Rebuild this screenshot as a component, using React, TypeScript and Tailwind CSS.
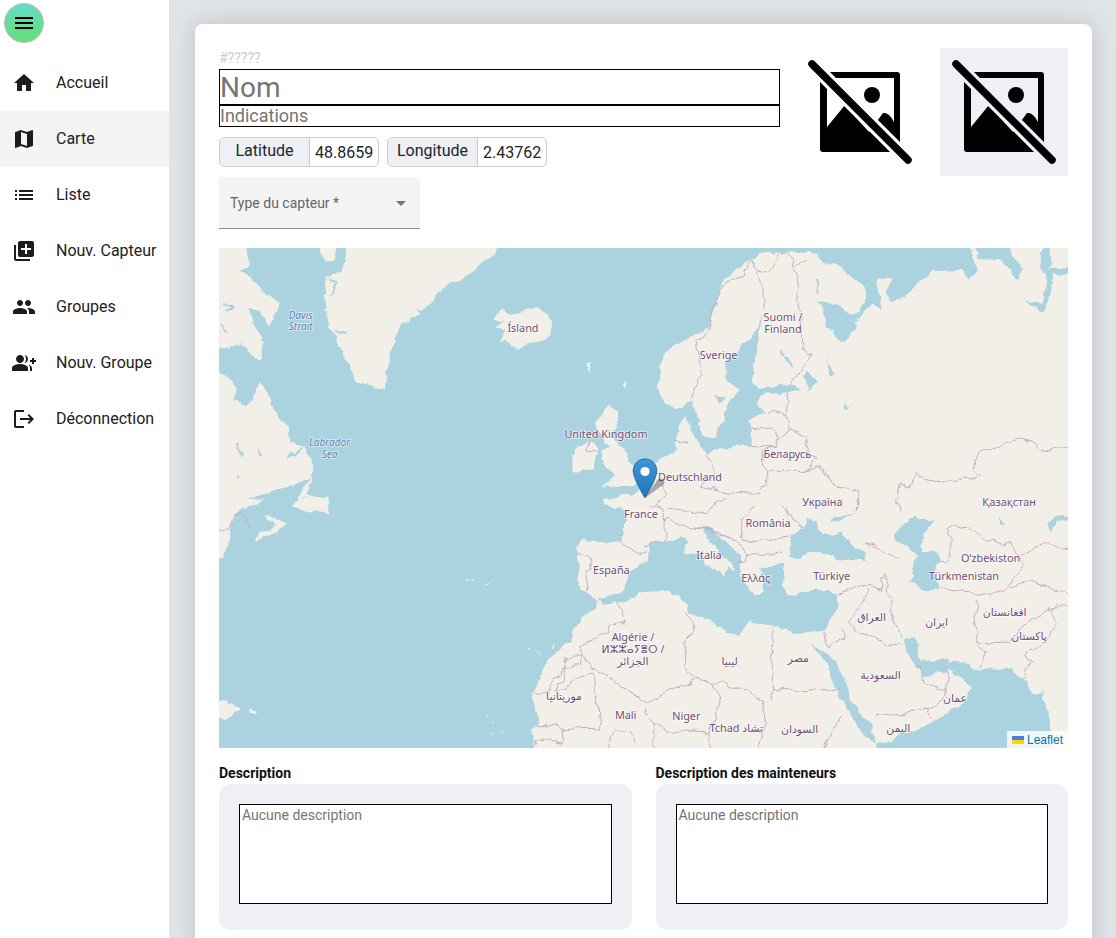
import { MdGroupAdd, MdHome, MdLibraryAdd, MdList, MdLogout, MdMap, MdMenu, MdPeople } from 'react-icons/md'

const NAV = [
  { label: 'Accueil', icon: MdHome },
  { label: 'Carte', icon: MdMap, active: true },
  { label: 'Liste', icon: MdList },
  { label: 'Nouv. Capteur', icon: MdLibraryAdd },
  { label: 'Groupes', icon: MdPeople },
  { label: 'Nouv. Groupe', icon: MdGroupAdd },
  { label: 'Déconnection', icon: MdLogout },
]

// map coordinates are 3x screen pixels, origin at the map's top-left corner
const LAND = [
  // Eurasia + Africa
  '945,1540 945,1470 935,1450 955,1425 950,1370 940,1340 985,1240 1015,1210 1060,1180 1065,1140 1095,1100 1120,1080 1135,1055 1130,1045 1100,1030 1085,1025 1072,990 1085,920 1075,895 1100,880 1205,888 1215,850 1215,790 1150,765 1150,752 1205,750 1240,738 1275,715 1285,650 1320,650 1335,630 1375,620 1375,540 1405,500 1415,560 1445,600 1475,612 1550,590 1595,590 1595,510 1645,490 1610,470 1635,440 1705,430 1745,420 1715,400 1625,425 1595,405 1615,290 1635,205 1605,260 1530,335 1525,390 1560,430 1520,480 1520,520 1485,560 1450,560 1425,460 1365,490 1330,470 1315,360 1345,310 1385,285 1440,250 1465,240 1495,170 1515,90 1575,50 1615,30 1675,10 1705,5 1765,10 1795,25 1875,70 1935,120 1935,165 1915,195 1865,180 1795,150 1820,210 1825,240 1875,280 1915,250 1915,210 1955,175 1985,190 1975,130 1970,85 2025,95 2000,130 2020,158 2050,155 2085,110 2135,70 2235,65 2250,90 2272,60 2260,30 2230,-40 2265,-40 2275,35 2345,40 2400,95 2415,60 2375,20 2375,-40 2600,-40 2600,1540 2500,1540 2495,1450 2470,1325 2440,1340 2405,1290 2375,1265 2285,1265 2195,1240 2195,1262 2255,1320 2215,1380 2125,1430 1975,1495 1975,1540',
  // Baffin island
  '-40,-40 60,-40 95,45 70,65 100,95 150,140 185,168 150,238 118,195 80,180 110,230 135,285 125,340 60,300 -40,290',
  // Labrador and eastern Canada
  '-40,362 45,400 48,445 82,476 130,405 160,470 185,520 215,578 255,600 282,640 282,690 200,722 90,745 135,752 120,765 50,790 35,825 20,930 -40,935',
  // Nova Scotia
  '105,882 115,855 150,845 170,830 135,808 150,805 195,820 210,825 200,835 140,865',
  // Newfoundland
  '220,775 238,752 320,748 335,800 310,790 270,790',
  '240,745 285,680 262,745 320,745 300,750 240,750',
  // Greenland and the island above it
  '375,-40 855,-40 820,30 760,65 720,100 690,100 670,120 640,165 590,210 550,225 540,265 510,320 505,370 495,420 470,425 415,395 380,330 345,270 320,190 315,130 320,85 360,75 385,40',
  '296,5 300,30 320,48 345,35 360,-40 300,-40',
  // Iceland
  '820,215 845,180 870,200 905,195 960,175 1000,220 990,260 950,280 915,300 880,290 845,280 860,250 825,245 860,225',
  // Ireland, Great Britain, Faroe, Shetland
  '1060,675 1065,610 1105,580 1135,600 1125,660 1075,680',
  '1140,720 1190,690 1155,640 1150,610 1170,590 1130,540 1140,500 1170,470 1200,500 1200,520 1175,560 1215,600 1245,660 1270,695 1240,708',
  '1108,342 1122,342 1116,372',
  '1205,410 1218,395 1212,425',
  // Mediterranean islands
  '1382,900 1395,900 1392,925 1380,925',
  '1378,940 1400,940 1398,985 1378,985',
  '1445,1005 1495,1012 1500,1030 1475,1030',
  '1635,1065 1680,1068 1635,1070',
  '1785,1072 1820,1060 1800,1078',
  '1240,985 1262,978 1258,990',
  // Hispaniola, Puerto Rico
  '-40,1365 30,1363 65,1385 15,1405 -40,1395',
  '85,1388 112,1390 112,1398 88,1398',
  // Atlantic specks
  '745,992 760,990 755,998',
  '765,990 772,988 770,994',
  '792,1010 805,1012 795,1015',
  '940,1117 947,1118 942,1122',
  '925,1205 930,1200 932,1210',
  '945,1205 955,1208 950,1212',
  '962,1210 970,1212 965,1217',
  '990,1205 1003,1188 997,1210',
  '802,1412 808,1412 806,1418',
  '822,1425 830,1425 826,1430',
  '812,1450 820,1448 818,1455',
  '838,1445 846,1445 842,1452',
]

const SEAS = [
  // Mediterranean
  '1135,1045 1205,1040 1230,985 1280,940 1285,890 1375,865 1405,880 1400,920 1440,925 1520,990 1505,1005 1515,975 1520,955 1550,965 1515,930 1445,840 1475,840 1570,930 1565,990 1600,1030 1610,1040 1625,1045 1640,1030 1620,960 1695,950 1705,1040 1755,1035 1850,1035 1840,1100 1820,1145 1735,1155 1655,1135 1595,1115 1560,1165 1515,1135 1405,1090 1375,1030 1275,1035 1200,1070 1150,1065',
  // Black Sea and Azov
  '1705,910 1725,865 1765,810 1800,825 1795,840 1830,860 1870,855 1875,870 1940,910 1940,940 1875,930 1785,920 1705,930',
  '1830,820 1900,795 1855,830',
  // Caspian
  '2035,850 2075,810 2145,810 2115,860 2105,910 2155,920 2165,940 2145,950 2155,1030 2105,1035 2070,1000 2095,930 2065,895 2035,880',
  // Red Sea and Suez
  '1785,1175 1822,1215 1825,1215 1875,1290 1895,1350 1955,1430 1975,1495 1965,1490 1915,1430 1865,1350 1840,1290 1805,1220',
  // Persian Gulf
  '2055,1175 2085,1170 2110,1230 2165,1240 2195,1230 2195,1260 2185,1270 2115,1285 2095,1240 2065,1210',
  // Ob gulf
  '2470,-40 2490,-40 2495,60 2600,55 2600,72 2505,75 2490,150 2465,185 2415,165 2470,160 2485,100 2465,30',
  // lakes
  '1745,385 1765,365 1795,400 1765,425',
  '1820,330 1855,385 1835,385',
  '1870,460 1895,480 1880,485',
  '1490,450 1515,445 1500,475',
  '2335,810 2355,815 2340,830',
  '2490,820 2525,805 2600,810 2515,825 2495,850',
]

const ICE_LINES = [
  'M15 165 L45 180 L25 195', 'M10 225 L30 250', 'M60 290 L110 350', 'M330 90 L350 110 L330 140',
  'M345 250 L380 260', 'M590 185 L610 205', 'M45 590 L70 620', 'M60 680 L62 690',
  'M205 625 L250 600', 'M115 600 L130 620', 'M1790 90 L1800 130', 'M1690 300 L1720 360',
]

const BORDERS = [
  'M1105 580 L1105 610 L1130 612',
  'M1425 455 L1445 370 L1435 280 L1465 240 L1515 110 L1540 85 L1575 85 L1580 60 L1595 45 L1635 105 L1635 190',
  'M1765 35 L1720 55 L1745 125 L1730 155 L1750 235 L1750 295 L1772 320 L1755 355 L1715 400',
  'M1595 45 L1615 65 L1655 75 L1680 15 L1705 5 L1725 25 L1720 55',
  'M1705 430 L1700 500', 'M1650 490 L1705 505 L1710 545', 'M1595 545 L1655 540 L1685 565 L1715 545',
  'M1685 565 L1670 600 L1575 590', 'M1715 545 L1755 565 L1765 610 L1790 630 L1775 660 L1755 670 L1640 670 L1630 610 L1670 600',
  'M1755 670 L1805 658 L1820 690 L1915 735 L1915 765 L1905 795',
  'M1475 610 L1485 670 L1445 715 L1545 735 L1620 740 L1640 710 L1640 670',
  'M1335 690 L1335 745 L1300 770', 'M1375 580 L1405 590',
  'M2035 750 L2045 710 L2065 720 L2095 675 L2175 700 L2255 700 L2285 690 L2255 665 L2280 610 L2405 575 L2445 575 L2450 600 L2485 605 L2600 600',
  'M-40 845 L30 840 L45 790 L75 795 L85 845',
  'M1085 920 L1120 925 L1105 980 L1105 1025', 'M1205 890 L1275 910',
  'M1200 1070 L1215 1120 L1170 1135 L1165 1155 L1085 1190 L1085 1250 L1030 1255 L1040 1230 L1085 1225',
  'M1085 1225 L1275 1360 L1435 1295', 'M1030 1255 L1030 1300 L1010 1305 L1010 1330 L1125 1270 L1140 1440 L1030 1445 L1010 1430 L950 1430',
  'M1030 1255 L990 1310 L985 1335 L945 1335', 'M1030 1445 L1030 1485 L950 1475 L950 1490',
  'M1155 1540 L1185 1455 L1235 1450 L1245 1490', 'M1275 1380 L1305 1430 L1305 1540 M1305 1430 L1360 1450 L1405 1450 L1470 1450 L1485 1540',
  'M1395 1090 L1430 1125 L1400 1180 L1405 1270 L1435 1295 L1485 1310 L1505 1300 L1640 1360 L1635 1430 L1610 1540',
  'M1485 1310 L1505 1350 L1470 1450', 'M1660 1140 L1660 1360', 'M1660 1325 L1865 1325', 'M1865 1400 L1805 1540',
  'M1865 1150 L1875 1170 L1830 1190 L1820 1150', 'M1995 1190 L1895 1130 L1905 1095 L1955 1025',
  'M1995 1190 L2055 1190', 'M1970 1410 L2125 1380 L2180 1350 L2175 1325 L2115 1310 L2105 1250',
  'M2125 1380 L2140 1420', 'M2180 1350 L2190 1255',
  'M1995 975 L2020 1060 L2015 1090 L2050 1170', 'M1855 1035 L1955 1015 L1995 1020 L1990 975', 'M1940 885 L2035 935',
  'M2275 1060 L2265 1110 L2275 1180 L2305 1210 L2285 1260',
  'M2155 1020 L2275 1040 L2365 1020 L2445 1000 L2525 1030 L2600 1070',
  'M2190 845 L2235 835 L2315 880 L2375 885 L2415 945 L2365 1020', 'M2190 845 L2190 935 L2155 940',
  'M2405 920 L2475 890 L2600 900', 'M2275 1180 L2375 1180 L2425 1120 L2525 1070',
  'M2405 1290 L2440 1250 L2420 1220 L2485 1170 L2515 1125 L2490 1080 L2600 1080',
  'M1350 790 L1455 790 L1525 750', 'M1335 820 L1350 810 L1405 840 L1485 850 L1555 880 L1585 920 L1615 915 L1685 920',
  'M1605 775 L1565 810 L1565 870 L1620 880 L1715 870', 'M1585 915 L1585 940 L1560 940', 'M1690 770 L1745 840',
  'M1335 825 L1335 880', 'M1275 895 L1340 880', 'M1915 750 L1905 795', 'M2025 750 L2045 785',
  'M1430 840 L1500 850 L1545 880', 'M1290 770 L1340 790 L1335 825',
]

const PLACES: [string, number, number][] = [
  ['Ísland', 912, 252], ['United Kingdom', 1161, 571], ['Suomi /', 1692, 220], ['Finland', 1692, 255],
  ['Sverige', 1499, 332], ['Беларусь', 1705, 631], ['Deutschland', 1413, 699], ['France', 1266, 811],
  ['España', 1177, 977], ['Algérie /', 1242, 1179], ['ⵍⵣⵣⴰⵢⴻⵔ /', 1242, 1215], ['الجزائر', 1242, 1252],
  ['موريتانيا', 1035, 1355], ['Mali', 1220, 1414], ['Україна', 1810, 775], ['Қазақстан', 2370, 775],
  ['România', 1647, 837], ['Italia', 1470, 932], ['Ελλάς', 1610, 1002], ['Türkiye', 1838, 997],
  ['O‘zbekiston', 2315, 942], ['Türkmenistan', 2235, 997], ['العراق', 1958, 1120], ['ایران', 2153, 1134],
  ['افغانستان', 2357, 1105], ['پاکستان', 2430, 1177], ['مصر', 1738, 1242], ['ليبيا', 1532, 1252],
  ['السعودية', 1985, 1292], ['عمان', 2208, 1362], ['Niger', 1402, 1417], ['Tchad تشاد', 1552, 1452],
  ['السودان', 1742, 1454], ['اليمن', 2038, 1452],
]

const WATER_NAMES: [string, number, number][] = [
  ['Davis', 245, 212], ['Strait', 245, 247], ['Labrador', 332, 594], ['Sea', 332, 630],
]

function MapDrawing() {
  return (
    <svg className="block w-full h-full" viewBox="0 0 2547 1500" preserveAspectRatio="none" fontFamily="'Noto Sans','DejaVu Sans',sans-serif">
      <defs>
        {/* roughens the straight polygon edges into coastlines */}
        <filter id="coast" filterUnits="userSpaceOnUse" x="-40" y="-40" width="2640" height="1580">
          <feTurbulence type="fractalNoise" baseFrequency="0.018" numOctaves="4" seed="7" result="noise" />
          <feDisplacementMap in="SourceGraphic" in2="noise" scale="34" xChannelSelector="R" yChannelSelector="G" />
        </filter>
      </defs>
      <rect width="2547" height="1500" fill="#aad3df" />
      <g filter="url(#coast)">
        {LAND.map((p) => <polygon key={p} points={p} fill="#f2efe9" />)}
        {SEAS.map((p) => <polygon key={p} points={p} fill="#aad3df" />)}
        {ICE_LINES.map((d) => <path key={d} d={d} fill="none" stroke="#aad3df" strokeWidth="6" />)}
        {BORDERS.map((d) => <path key={d} d={d} fill="none" stroke="#c2aec4" strokeWidth="3" />)}
      </g>
      {WATER_NAMES.map(([t, x, y]) => (
        <text key={t} x={x} y={y} textAnchor="middle" fontSize="30" fontStyle="italic" fill="#5d7db5" stroke="#ffffff" strokeOpacity="0.6" strokeWidth="5" paintOrder="stroke">{t}</text>
      ))}
      {PLACES.map(([t, x, y]) => (
        <text key={t} x={x} y={y} textAnchor="middle" fontSize="32.5" fill="#6f4d76" stroke="#ffffff" strokeOpacity="0.7" strokeWidth="5" paintOrder="stroke">{t}</text>
      ))}
    </svg>
  )
}

function Pin() {
  return (
    <svg className="absolute left-[413px] top-[210px] w-[45px] h-[42px] pointer-events-none" viewBox="0 0 45 42">
      <defs>
        <linearGradient id="pin-blue" x1="0" y1="0" x2="0" y2="1">
          <stop offset="0" stopColor="#3f97d6" />
          <stop offset="1" stopColor="#2273b8" />
        </linearGradient>
      </defs>
      <path d="M13 40 L26 21 C33 19 34 27 28 29 Z" fill="rgba(0,0,0,0.3)" />
      <path d="M13 1 C6.4 1 1.2 6.2 1.2 12.8 C1.2 21 13 40 13 40 C13 40 24.8 21 24.8 12.8 C24.8 6.2 19.6 1 13 1 Z" fill="url(#pin-blue)" stroke="#2a6ea5" strokeWidth="1" />
      <circle cx="13" cy="13.5" r="4.6" fill="#ffffff" />
    </svg>
  )
}

// broken picture placeholder, `text-*` on the svg gives the colour of the gap around the slash
function NoImage({ className }: { className: string }) {
  return (
    <div className={`w-32 h-32 shrink-0 ${className}`}>
      <svg className="w-full h-full blur-[0.5px]" viewBox="0 0 128 128">
        <path
          fillRule="evenodd"
          fill="#000000"
          d="M27 24 H101 a3 3 0 0 1 3 3 V101 a3 3 0 0 1 -3 3 H27 a3 3 0 0 1 -3 -3 V27 a3 3 0 0 1 3 -3 Z M31 30 V79 L49 57 L73 84 L87 65 Q93 64 98 74 V30 Z"
        />
        <circle cx="76" cy="47" r="8" fill="#000000" />
        <line x1="16" y1="16" x2="112" y2="112" stroke="currentColor" strokeWidth="14" />
        <line x1="16" y1="16" x2="112" y2="112" stroke="#000000" strokeWidth="7.5" strokeLinecap="round" />
      </svg>
    </div>
  )
}

function Coord({ label, value }: { label: string; value: string }) {
  return (
    <div className="flex w-40 h-[30px] rounded-[5px] border border-[#cccccc] overflow-hidden">
      <div className="w-[90px] bg-[#eff0f5] border-r border-[#cccccc] text-center text-base leading-[26px] text-[#212529]">{label}</div>
      <div className="flex-1 pl-[5px] text-base leading-[29px] text-[#212529]">{value}</div>
    </div>
  )
}

function DescriptionBox({ title }: { title: string }) {
  return (
    <div>
      <div className="text-sm font-bold leading-[20px] mb-[1px] text-[#111111]">{title}</div>
      <div className="bg-[#eff0f5] rounded-xl p-5 h-[146px]">
        <textarea
          readOnly
          placeholder="Aucune description"
          className="block w-full h-[100px] border border-black bg-white px-[2px] text-sm resize-none outline-none placeholder:text-[#757575]"
        />
      </div>
    </div>
  )
}

export default function App() {
  return (
    <div className="h-screen flex overflow-hidden bg-[#e0e3e8] font-['Roboto',sans-serif]">
      {/* Sidebar */}
      <aside className="w-[169px] shrink-0 bg-white">
        <div className="h-[55px] pl-1 pt-[3px]">
          <button className="w-10 h-10 rounded-full border border-[#bdbdbd] bg-gradient-to-b from-[#65dcc4] to-[#66dd72] flex items-center justify-center">
            <MdMenu className="w-6 h-6 text-black" />
          </button>
        </div>
        <nav>
          {NAV.map((item) => (
            <div key={item.label} className={`h-14 flex items-center pl-3 ${item.active ? 'bg-[#f4f4f4]' : ''}`}>
              <item.icon className="w-6 h-6 text-[#1c1c1c]" />
              <span className="ml-5 text-base text-[#212121]">{item.label}</span>
            </div>
          ))}
        </nav>
      </aside>

      {/* Card */}
      <main className="flex-1 min-w-0 pt-6 pl-[26px] pr-6">
        <div className="bg-white rounded-lg p-6 shadow-[0_0_22px_rgba(0,0,0,0.16)]">
          <div className="flex gap-4 h-[200px]">
            <div className="flex-1 min-w-0">
              <div className="text-sm leading-[21px] text-[#cccccc]">#?????</div>
              <input
                readOnly
                placeholder="Nom"
                className="block w-full h-9 border border-black bg-white pt-[2px] text-[28px] outline-none placeholder:text-[#757575]"
              />
              <input
                readOnly
                placeholder="Indications"
                className="block w-full h-[22px] border border-black bg-white text-lg outline-none placeholder:text-[#757575]"
              />
              <div className="flex gap-2 mt-[10px]">
                <Coord label="Latitude" value="48.8659" />
                <Coord label="Longitude" value="2.43762" />
              </div>
              <div className="relative w-[201px] h-[52px] mt-[10px] bg-[#f4f4f4] rounded-t border-b border-[#8c8c8c] pl-[11px] text-sm leading-[53px] text-[#666666]">
                Type du capteur *
                <span className="absolute right-[14px] top-[24px] w-0 h-0 border-x-[5px] border-x-transparent border-t-[5px] border-t-[#757575]" />
              </div>
            </div>
            <NoImage className="text-white" />
            <NoImage className="bg-[#eff0f5] text-[#eff0f5]" />
          </div>

          {/* Map */}
          <div className="relative h-[500px] overflow-hidden">
            <MapDrawing />
            <Pin />
            <div className="absolute right-0 bottom-0 h-[17px] px-[5px] bg-white/80 flex items-center gap-[3px] text-xs text-[#0078a8] font-['Liberation_Sans',sans-serif]">
              <svg className="w-3 h-2" viewBox="0 0 12 8">
                <rect width="12" height="4" fill="#4c7be1" />
                <rect y="4" width="12" height="4" fill="#ffd500" />
              </svg>
              Leaflet
            </div>
          </div>

          <div className="grid grid-cols-2 gap-6 mt-[15px]">
            <DescriptionBox title="Description" />
            <DescriptionBox title="Description des mainteneurs" />
          </div>
        </div>
      </main>
    </div>
  )
}
